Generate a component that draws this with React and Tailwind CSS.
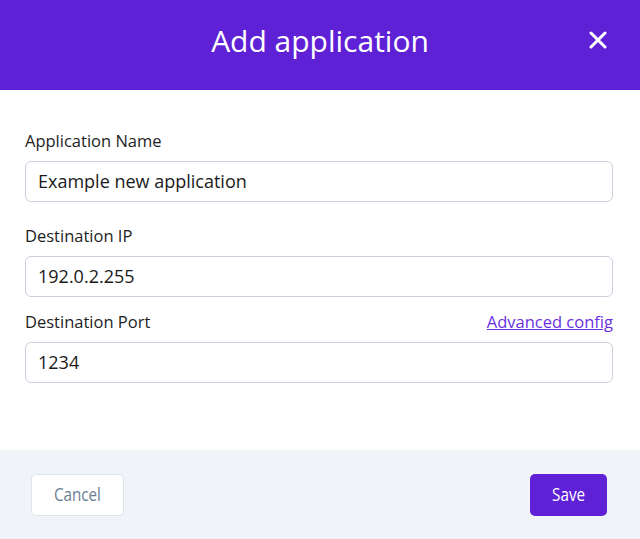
import React from "react";

const font = { fontFamily: '"Open Sans", "Noto Sans", sans-serif' };

function Field({ label, value, extra, className = "" }) {
  return (
    <div className={className}>
      <div className="flex items-center justify-between h-[22px] mb-[9px]">
        <span className="text-[16.5px] leading-[22px] text-[#1e1e1e]">{label}</span>
        {extra}
      </div>
      <div className="h-[41px] rounded-[6px] border border-[#c9d2dc] flex items-center px-[12px] text-[18px] text-[#1a1a1a]">
        {value}
      </div>
    </div>
  );
}

export default function App() {
  return (
    <div className="w-[640px] h-[539px] bg-white flex flex-col" style={font}>
      <div className="h-[90px] bg-[#5f21d6] flex items-center justify-center relative shrink-0">
        <span className="text-white text-[30px] leading-none -mt-[9px]">Add application</span>
        <button className="absolute right-[33px] top-[31px] w-[18px] h-[18px] text-white">
          <svg viewBox="0 0 18 18" width="18" height="18" fill="none" stroke="white" strokeWidth="3" strokeLinecap="round">
            <path d="M2 2 L16 16 M16 2 L2 16" />
          </svg>
        </button>
      </div>
      <div className="flex-1 pl-[25px] pr-[27px] pt-[40px]">
        <Field label="Application Name" value="Example new application" />
        <Field className="mt-[23px]" label="Destination IP" value="192.0.2.255" />
        <Field
          className="mt-[14px]"
          label="Destination Port"
          value="1234"
          extra={
            <a className="text-[16.5px] leading-[22px] text-[#6a2fe0] underline">Advanced config</a>
          }
        />
      </div>
      <div className="h-[89px] bg-[#f0f3f8] flex items-center justify-between pl-[31px] pr-[33px] shrink-0">
        <button className="h-[42px] w-[93px] rounded-[5px] bg-white border border-[#dde4ec] text-[#6b7f93] text-[19px] flex items-center justify-center">
          <span className="inline-block scale-x-[0.8]">Cancel</span>
        </button>
        <button className="h-[42px] w-[77px] rounded-[5px] bg-[#5f21d6] text-white text-[19px] flex items-center justify-center">
          <span className="inline-block scale-x-[0.8]">Save</span>
        </button>
      </div>
    </div>
  );
}
